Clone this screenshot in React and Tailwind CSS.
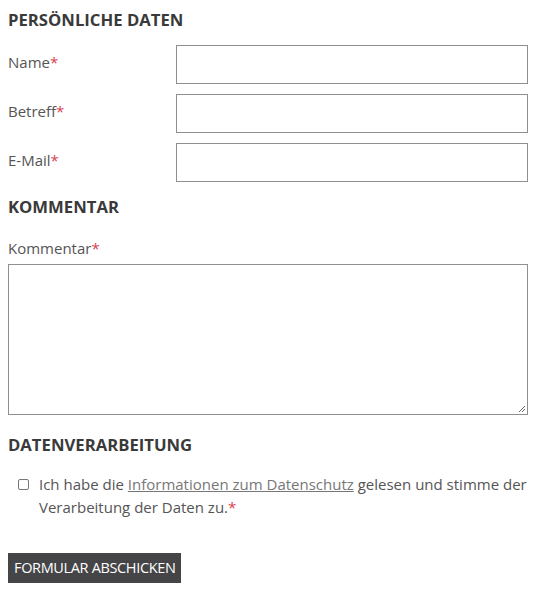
export default function App() {
  const label = "text-[15px] text-[#555]";
  const star = <span className="text-[#d9434e]">*</span>;
  return (
    <div className="bg-white w-[534px] h-[589px] pl-2 pr-[6px] pt-[9px] text-[#555]" style={{ fontFamily: '"Open Sans", sans-serif' }}>
      <h2 className="text-[16.7px] font-bold text-[#3a3a3a] leading-[22px] uppercase">Persönliche Daten</h2>
      <div className="mt-[14px] flex flex-col gap-[10px]">
        {["Name", "Betreff", "E-Mail"].map((n) => (
          <div key={n} className="flex">
            <div className={`${label} w-[168px] shrink-0 pt-[5px] leading-[24px]`}>{n}{star}</div>
            <div className="flex-1 h-[39px] border border-[#8f8f8f] bg-white" />
          </div>
        ))}
      </div>
      <h2 className="mt-[14px] text-[16.7px] font-bold text-[#3a3a3a] leading-[22px] uppercase">Kommentar</h2>
      <div className={`${label} mt-[18px] leading-[24px]`}>Kommentar{star}</div>
      <div className="mt-[4px] relative h-[151px] border border-[#8f8f8f] bg-white">
        <svg className="absolute right-[1px] bottom-[1px]" width="8" height="8" viewBox="0 0 8 8">
          <path d="M7 1 L1 7 M7 4 L4 7" stroke="#666" strokeWidth="1" />
        </svg>
      </div>
      <h2 className="mt-[19px] text-[16.7px] font-bold text-[#3a3a3a] leading-[22px] uppercase">Datenverarbeitung</h2>
      <div className="mt-[17px] flex">
        <div className="w-[31px] shrink-0 pl-[10px] pt-[6px]">
          <div className="w-[11px] h-[11px] border border-[#777] rounded-[2px] bg-white" />
        </div>
        <p className={`${label} leading-[23px]`}>
          Ich habe die <span className="underline text-[#777]">Informationen zum Datenschutz</span> gelesen und stimme der Verarbeitung der Daten zu.{star}
        </p>
      </div>
      <button className="mt-[34px] bg-[#454446] text-white text-[14.5px] tracking-[-0.35px] h-[30px] px-[6px] leading-[30px] uppercase">Formular abschicken</button>
    </div>
  );
}
